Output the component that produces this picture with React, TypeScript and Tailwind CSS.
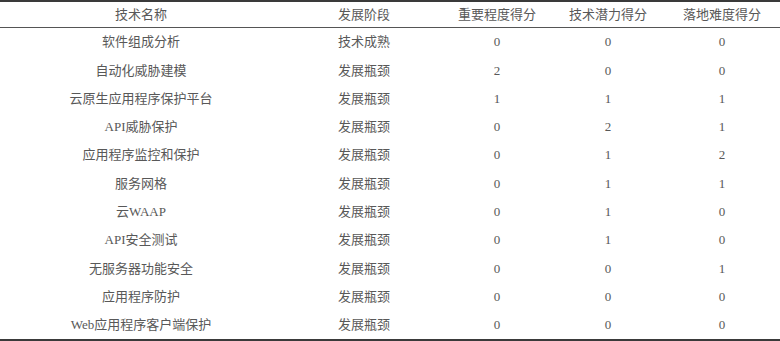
const rows: [string, string, number, number, number][] = [
  ['软件组成分析', '技术成熟', 0, 0, 0],
  ['自动化威胁建模', '发展瓶颈', 2, 0, 0],
  ['云原生应用程序保护平台', '发展瓶颈', 1, 1, 1],
  ['API威胁保护', '发展瓶颈', 0, 2, 1],
  ['应用程序监控和保护', '发展瓶颈', 0, 1, 2],
  ['服务网格', '发展瓶颈', 0, 1, 1],
  ['云WAAP', '发展瓶颈', 0, 1, 0],
  ['API安全测试', '发展瓶颈', 0, 1, 0],
  ['无服务器功能安全', '发展瓶颈', 0, 0, 1],
  ['应用程序防护', '发展瓶颈', 0, 0, 0],
  ['Web应用程序客户端保护', '发展瓶颈', 0, 0, 0],
];

const cols = 'grid grid-cols-[282px_164px_102px_120px_108px] items-center text-center';

export default function App() {
  return (
    <div
      className="flex h-[341px] w-[780px] flex-col border-y-2 border-[#3a3a3a] bg-white text-[13px] text-[#585858]"
      style={{ fontFamily: '"Liberation Serif", "Noto Sans CJK SC", serif' }}
    >
      <div className={`${cols} h-[26px] border-b border-[#555]`}>
        <div>技术名称</div>
        <div>发展阶段</div>
        <div>重要程度得分</div>
        <div>技术潜力得分</div>
        <div>落地难度得分</div>
      </div>
      <div className="grid flex-1 grid-rows-[repeat(11,1fr)]">
        {rows.map((r) => (
          <div key={r[0]} className={cols}>
            <div>{r[0]}</div>
            <div>{r[1]}</div>
            <div>{r[2]}</div>
            <div>{r[3]}</div>
            <div>{r[4]}</div>
          </div>
        ))}
      </div>
    </div>
  );
}
